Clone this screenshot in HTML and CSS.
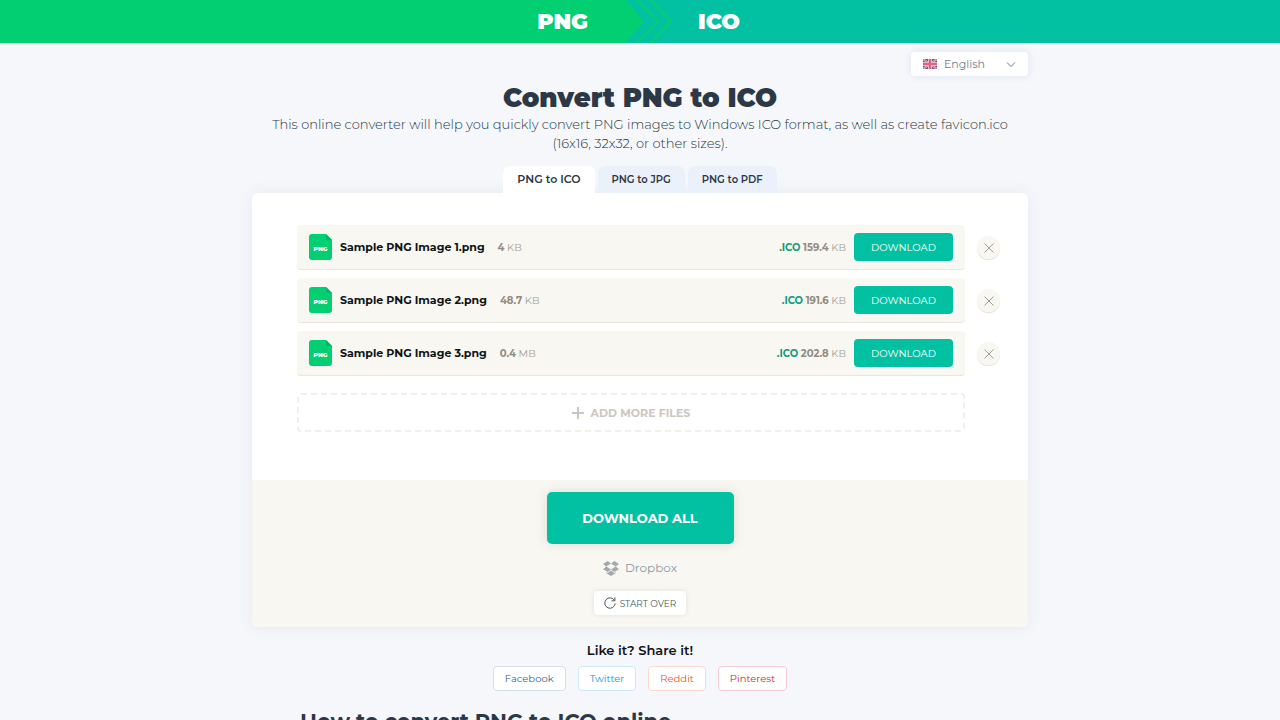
FILE: index.html
```html
<!DOCTYPE html>
<html lang="en">
<head>
	<meta charset="utf-8">
	<meta name="viewport" content="width=device-width, initial-scale=1">
	<title>Convert PNG to ICO</title>
	<link rel="stylesheet" href="styles.css">
</head>
<body>
	<!-- shared icons -->
	<svg class="sprite" aria-hidden="true">
		<symbol id="icon-file" viewBox="0 0 23 26">
			<path fill="#02cf72" d="M3 0h14l6 6v17a3 3 0 0 1-3 3H3a3 3 0 0 1-3-3V3a3 3 0 0 1 3-3z"/>
			<path fill="#04b566" d="M17 0l6 6h-4a2 2 0 0 1-2-2z"/>
		</symbol>
		<symbol id="icon-close" viewBox="0 0 10 10">
			<path fill="none" stroke="#a39c92" d="M.5.5l9 9M9.5.5l-9 9"/>
		</symbol>
	</svg>

	<header class="top">
		<div class="top-from">PNG</div>
		<svg class="top-arrows" viewBox="0 0 80 43" aria-hidden="true">
			<path fill="#02cf72" d="M0 0h26l18 21.500L26 43H0z"/>
			<path fill="none" stroke="#03cc7c" stroke-width="3" d="M35 -3l23 24.500L35 46M48 -3l23 24.500L48 46"/>
		</svg>
		<div class="top-to">ICO</div>
	</header>

	<main class="page">
		<div class="lang">
			<svg class="lang-flag" viewBox="0 0 14 10" aria-hidden="true">
				<path fill="#56598f" d="M0 0h14v10H0z"/>
				<path stroke="#e9c3d4" stroke-width="2" d="M0 0l14 10M14 0L0 10"/>
				<path stroke="#d8708c" d="M0 0l14 10M14 0L0 10"/>
				<path stroke="#eeb4c6" stroke-width="4" d="M7 0v10M0 5h14"/>
				<path stroke="#dd6280" stroke-width="2" d="M7 0v10M0 5h14"/>
			</svg>
			<select class="lang-select" aria-label="Language">
				<option>English</option>
			</select>
			<svg class="lang-arrow" viewBox="0 0 10 6" aria-hidden="true"><path fill="none" stroke="#6b7580" d="M1 .5l4 4 4-4"/></svg>
		</div>

		<h1 class="title">Convert PNG to ICO</h1>
		<p class="subtitle">This online converter will help you quickly convert PNG images to Windows ICO format, as well as create favicon.ico (16x16, 32x32, or other sizes).</p>

		<nav class="tabs">
			<a class="tab tab-active" href="#">PNG to ICO</a>
			<a class="tab" href="#">PNG to JPG</a>
			<a class="tab" href="#">PNG to PDF</a>
		</nav>

		<section class="panel">
			<div class="panel-body">
				<ul class="files">
					<li class="file">
						<div class="file-card">
							<span class="file-icon"><svg aria-hidden="true"><use href="#icon-file"/></svg><span class="file-ext">PNG</span></span>
							<span class="file-name">Sample PNG Image 1.png</span>
							<span class="file-size"><b>4</b> KB</span>
							<span class="file-result"><b class="file-format">.ICO</b> <b>159.4</b> KB</span>
							<button class="download" type="button">DOWNLOAD</button>
						</div>
						<button class="remove" type="button" aria-label="Remove"><svg aria-hidden="true"><use href="#icon-close"/></svg></button>
					</li>
					<li class="file">
						<div class="file-card">
							<span class="file-icon"><svg aria-hidden="true"><use href="#icon-file"/></svg><span class="file-ext">PNG</span></span>
							<span class="file-name">Sample PNG Image 2.png</span>
							<span class="file-size"><b>48.7</b> KB</span>
							<span class="file-result"><b class="file-format">.ICO</b> <b>191.6</b> KB</span>
							<button class="download" type="button">DOWNLOAD</button>
						</div>
						<button class="remove" type="button" aria-label="Remove"><svg aria-hidden="true"><use href="#icon-close"/></svg></button>
					</li>
					<li class="file">
						<div class="file-card">
							<span class="file-icon"><svg aria-hidden="true"><use href="#icon-file"/></svg><span class="file-ext">PNG</span></span>
							<span class="file-name">Sample PNG Image 3.png</span>
							<span class="file-size"><b>0.4</b> MB</span>
							<span class="file-result"><b class="file-format">.ICO</b> <b>202.8</b> KB</span>
							<button class="download" type="button">DOWNLOAD</button>
						</div>
						<button class="remove" type="button" aria-label="Remove"><svg aria-hidden="true"><use href="#icon-close"/></svg></button>
					</li>
				</ul>
				<button class="add-more" type="button">
					<svg class="add-icon" viewBox="0 0 12 12" aria-hidden="true"><path stroke="#cbc6bf" stroke-width="2" d="M6 0v12M0 6h12"/></svg>
					ADD MORE FILES
				</button>
			</div>

			<div class="panel-footer">
				<button class="download-all" type="button">DOWNLOAD ALL</button>
				<a class="dropbox" href="#">
					<svg class="dropbox-icon" viewBox="0 0 16 15" aria-hidden="true">
						<path fill="#a3a9ae" d="M4.700 0L8 2.600 3.300 5.500 0 2.900zM11.300 0L16 2.900l-3.300 2.600L8 2.600zM0 8.200l3.300-2.700L8 8.400l-3.300 2.700zM12.700 5.500L16 8.200l-4.700 2.900L8 8.400zM4.700 12.100L8 9.400l3.300 2.700 1.400-.9v1L8 15l-4.700-2.800v-1z"/>
					</svg>
					Dropbox
				</a>
				<button class="start-over" type="button">
					<svg class="start-icon" viewBox="0 0 12 12" aria-hidden="true"><path fill="none" stroke="#4c5358" d="M10.500 3.400A5.200 5.200 0 1 0 11.200 6.500M10.900.4v3.400H7.500"/></svg>
					START OVER
				</button>
			</div>
		</section>

		<section class="share">
			<h3 class="share-title">Like it? Share it!</h3>
			<div class="share-links">
				<a class="share-link facebook" href="#">Facebook</a>
				<a class="share-link twitter" href="#">Twitter</a>
				<a class="share-link reddit" href="#">Reddit</a>
				<a class="share-link pinterest" href="#">Pinterest</a>
			</div>
		</section>

		<article class="about">
			<h2 class="about-title">How to convert PNG to ICO online</h2>
		</article>
	</main>
</body>
</html>
```

FILE: styles.css
```css
* { box-sizing: border-box; }

body {
	margin: 0;
	background: #f5f7fb;
	color: #0f1419;
	font-family: "Montserrat", "Inter", sans-serif;
	font-size: 12px;
}

h1, h2, h3, p, ul { margin: 0; padding: 0; }
a { text-decoration: none; }
button, select { font-family: inherit; cursor: pointer; }
svg { display: block; }

.sprite { position: absolute; width: 0; height: 0; }

/* top bar */
.top {
	display: grid;
	grid-template-columns: 1fr 80px 1fr;
	height: 43px;
	color: #fff;
	font-size: 22px;
	font-weight: 900;
	line-height: 43px;
	background: #02c1a2;
}
.top-from { padding-right: 12px; text-align: right; background: #02cf72; }
.top-to { padding-left: 18px; }
.top-arrows { width: 80px; height: 43px; }

.page { width: 100%; max-width: 776px; margin: 0 auto; }

/* language */
.lang {
	position: relative;
	width: 117px;
	margin: 9px 0 0 auto;
}
.lang-select {
	display: block;
	width: 100%;
	height: 24px;
	padding: 0 20px 0 33px;
	border: 0;
	border-radius: 4px;
	background: #fff;
	box-shadow: 0 0 8px rgba(60, 80, 120, .12);
	color: #6e7c8c;
	font-size: 11px;
	appearance: none;
}
.lang-flag { position: absolute; top: 7px; left: 12px; width: 14px; height: 10px; pointer-events: none; }
.lang-arrow { position: absolute; top: 10px; right: 12px; width: 10px; height: 6px; pointer-events: none; }

.title {
	margin-top: 5px;
	color: #2c3845;
	font-size: 26px;
	font-weight: 900;
	line-height: 34px;
	text-align: center;
}
.subtitle {
	color: #25373f;
	font-size: 13px;
	font-weight: 300;
	line-height: 19px;
	text-align: center;
}

/* tabs */
.tabs { display: flex; justify-content: center; gap: 3px; margin-top: 13px; }
.tab {
	padding: 0 14px;
	border-radius: 7px 7px 0 0;
	background: #ebf1fa;
	color: #2c3845;
	font-size: 10px;
	font-weight: 600;
	line-height: 27px;
}
.tab-active { background: #fff; font-size: 11px; }

/* converter */
.panel {
	border-radius: 6px;
	background: #fff;
	box-shadow: 0 0 16px rgba(60, 80, 120, .08);
}
.panel-body { padding: 32px 28px 48px 45px; }
.files { display: grid; gap: 8px; list-style: none; }
.file { display: flex; align-items: center; gap: 12px; }
.file-card {
	display: flex;
	flex: 1;
	align-items: center;
	height: 45px;
	padding: 0 12px;
	border-bottom: 1px solid #e9e6df;
	border-radius: 4px;
	background: #f8f7f2;
}
.file-icon { position: relative; width: 23px; height: 26px; }
.file-icon svg { width: 23px; height: 26px; }
.file-ext {
	position: absolute;
	top: 10px;
	left: 0;
	width: 23px;
	color: #fff;
	font-size: 6px;
	font-weight: 900;
	line-height: 10px;
	text-align: center;
}
.file-name { margin-left: 8px; font-size: 11px; font-weight: 700; }
.file-size { margin-left: 13px; }
.file-size, .file-result { color: #a5a097; font-size: 10px; }
.file-size b, .file-result b { color: #928b80; font-weight: 700; }
.file-result { margin-left: auto; }
.file-result .file-format { color: #119c80; }
.download {
	width: 99px;
	height: 28px;
	margin-left: 8px;
	border: 0;
	border-radius: 4px;
	background: #02c1a2;
	color: #fff;
	font-size: 10px;
}
.remove {
	display: grid;
	place-items: center;
	width: 23px;
	height: 23px;
	padding: 0;
	border: 0;
	border-radius: 50%;
	background: #f8f7f2;
	box-shadow: 0 1px 1px #e4e1da;
}
.remove svg { width: 10px; height: 10px; }
.add-more {
	display: flex;
	align-items: center;
	justify-content: center;
	gap: 7px;
	width: calc(100% - 35px);
	height: 39px;
	margin-top: 17px;
	border: 2px dashed #f1efe9;
	border-radius: 4px;
	background: none;
	color: #cbc6bf;
	font-size: 11px;
	font-weight: 700;
}
.add-icon { width: 12px; height: 12px; }

.panel-footer {
	display: flex;
	flex-direction: column;
	align-items: center;
	padding: 12px 0;
	border-radius: 0 0 6px 6px;
	background: #f8f7f2;
}
.download-all {
	width: 187px;
	height: 52px;
	border: 0;
	border-radius: 5px;
	background: #02c1a2;
	box-shadow: 0 0 12px rgba(90, 80, 50, .16);
	color: #fff;
	font-size: 13px;
	font-weight: 700;
}
.dropbox {
	display: flex;
	align-items: center;
	gap: 6px;
	margin-top: 14px;
	color: #8c96a0;
	font-size: 12px;
	line-height: 20px;
}
.dropbox-icon { width: 16px; height: 15px; }
.start-over {
	display: flex;
	align-items: center;
	gap: 4px;
	height: 24px;
	margin-top: 13px;
	padding: 0 10px;
	border: 0;
	border-radius: 4px;
	background: #fff;
	box-shadow: 0 0 4px rgba(90, 80, 50, .14);
	color: #4c5c5f;
	font-size: 9px;
}
.start-icon { width: 12px; height: 12px; }

/* share */
.share { margin-top: 14px; text-align: center; }
.share-title { font-size: 13px; font-weight: 600; line-height: 18px; }
.share-links { display: flex; justify-content: center; gap: 12px; margin-top: 7px; }
.share-link {
	padding: 0 11px;
	border: 1px solid;
	border-radius: 4px;
	background: #fff;
	font-size: 10px;
	line-height: 23px;
}
.facebook { border-color: #d5dfec; color: #46608c; }
.twitter { border-color: #cbe8f8; color: #1495dc; }
.reddit { border-color: #ffd8cc; color: #f4502c; }
.pinterest { border-color: #f9ccd3; color: #d81c36; }

.about { margin-top: 17px; padding: 0 48px 24px; }
.about-title { color: #2c3845; font-size: 21px; font-weight: 700; line-height: 28px; }
```
